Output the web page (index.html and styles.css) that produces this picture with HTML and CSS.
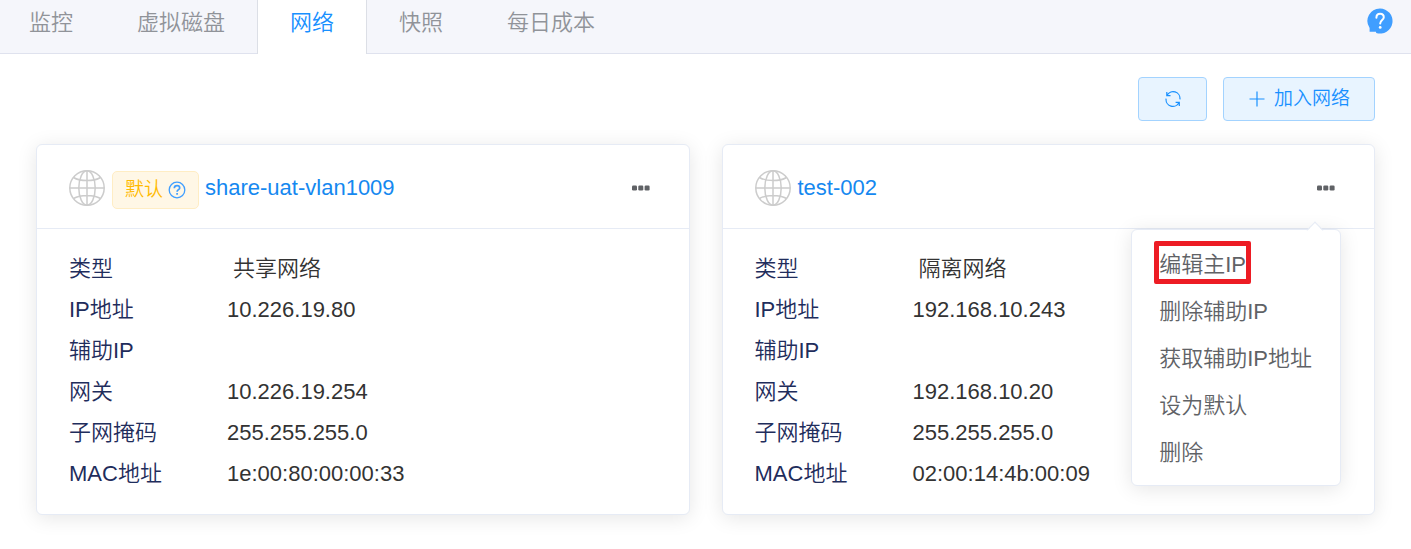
FILE: index.html
```html
<!DOCTYPE html>
<html lang="zh-CN">
<head>
<meta charset="utf-8">
<meta name="viewport" content="width=device-width, initial-scale=1">
<title>网络</title>
<link rel="stylesheet" href="styles.css">
</head>
<body>
<svg class="sprite" aria-hidden="true">
  <symbol id="globe" viewBox="0 0 36 36">
    <g fill="none" stroke="currentColor" stroke-width="1.5">
      <circle cx="18" cy="18" r="17.2"/>
      <ellipse cx="18" cy="18" rx="8.2" ry="17.2"/>
      <path d="M18 .8v34.400M.8 18h34.400M4.500 7.500C8 9.600 12.700 10.600 18 10.600S28 9.600 31.500 7.500M4.500 28.500C8 26.400 12.700 25.400 18 25.400S28 26.400 31.500 28.500"/>
    </g>
  </symbol>
  <symbol id="dots" viewBox="0 0 20 6">
    <rect x="1" y="0.500" width="5" height="5" rx="1.200"/>
    <rect x="7.300" y="0.500" width="5" height="5" rx="1.200"/>
    <rect x="13.600" y="0.500" width="5" height="5" rx="1.200"/>
  </symbol>
</svg>

<header class="topbar">
  <nav class="tabs">
    <a class="tab" href="#monitor">监控</a>
    <a class="tab" href="#disk">虚拟磁盘</a>
    <a class="tab tab-active" href="#network" aria-current="page">网络</a>
    <a class="tab" href="#snapshot">快照</a>
    <a class="tab" href="#cost">每日成本</a>
  </nav>
  <button class="help" type="button" aria-label="帮助">
    <svg class="help-icon" viewBox="0 0 26 26">
      <path fill="#409eff" d="M13 .5a12.500 12.500 0 1 1-3.800 24.400L9 23.800H2.600V20A12.500 12.500 0 0 1 13 .5z"/>
      <path fill="none" stroke="#fff" stroke-width="2" stroke-linecap="round" d="M9.400 9.800c0-2.500 1.500-4 3.700-4s3.700 1.400 3.700 3.500c0 2.700-3.600 2.900-3.600 6.200"/>
      <circle cx="13.200" cy="19.400" r="1.400" fill="#fff"/>
    </svg>
  </button>
</header>

<main class="content">
  <div class="toolbar">
    <button class="btn btn-refresh" type="button" aria-label="刷新">
      <svg class="btn-icon" viewBox="0 0 16 16" fill="none" stroke="currentColor" stroke-width="1.2">
        <path d="M1.800 1v3.700h3.700M2 4.600A6.800 6.800 0 0 1 14.900 8.400M14.300 15v-3.700h-3.700M14 11.400A6.800 6.800 0 0 1 1.100 7.600"/>
      </svg>
    </button>
    <button class="btn" type="button">
      <svg class="btn-icon" viewBox="0 0 16 16" fill="none" stroke="currentColor" stroke-width="1.200">
        <path d="M8 .5v15M.5 8h15"/>
      </svg>
      <span>加入网络</span>
    </button>
  </div>

  <div class="cards">
    <section class="card">
      <div class="card-head">
        <svg class="globe"><use href="#globe"/></svg>
        <span class="tag">默认
          <svg class="tag-icon" viewBox="0 0 18 18" fill="none" stroke="currentColor">
            <circle cx="9" cy="9" r="7.800" stroke-width="1.300"/>
            <path stroke-width="1.700" d="M6.300 7.300c0-1.600 1.100-2.600 2.700-2.600s2.700.9 2.700 2.300c0 1.700-2.600 1.700-2.600 3.700M9.100 12v1.700"/>
          </svg>
        </span>
        <a class="name" href="#share-uat-vlan1009">share-uat-vlan1009</a>
        <div class="menu-anchor">
          <button class="more" type="button" aria-label="更多操作"><svg class="dots"><use href="#dots"/></svg></button>
        </div>
      </div>
      <dl class="props">
        <dt>类型</dt><dd>&nbsp;共享网络</dd>
        <dt>IP地址</dt><dd>10.226.19.80</dd>
        <dt>辅助IP</dt><dd></dd>
        <dt>网关</dt><dd>10.226.19.254</dd>
        <dt>子网掩码</dt><dd>255.255.255.0</dd>
        <dt>MAC地址</dt><dd>1e:00:80:00:00:33</dd>
      </dl>
    </section>

    <section class="card">
      <div class="card-head">
        <svg class="globe"><use href="#globe"/></svg>
        <a class="name" href="#test-002">test-002</a>
        <div class="menu-anchor">
          <button class="more" type="button" aria-label="更多操作" aria-expanded="true"><svg class="dots"><use href="#dots"/></svg></button>
          <div class="menu">
            <button class="menu-item menu-item-marked" type="button">编辑主IP</button>
            <button class="menu-item" type="button">删除辅助IP</button>
            <button class="menu-item" type="button">获取辅助IP地址</button>
            <button class="menu-item" type="button">设为默认</button>
            <button class="menu-item" type="button">删除</button>
          </div>
        </div>
      </div>
      <dl class="props">
        <dt>类型</dt><dd>&nbsp;隔离网络</dd>
        <dt>IP地址</dt><dd>192.168.10.243</dd>
        <dt>辅助IP</dt><dd></dd>
        <dt>网关</dt><dd>192.168.10.20</dd>
        <dt>子网掩码</dt><dd>255.255.255.0</dd>
        <dt>MAC地址</dt><dd>02:00:14:4b:00:09</dd>
      </dl>
    </section>
  </div>
</main>
</body>
</html>
```

FILE: styles.css
```css
*,
*::before,
*::after {
  box-sizing: border-box;
}

body {
  margin: 0;
  background: #fff;
  color: #333;
  font: 350 22px/30px "Liberation Sans", "Noto Sans CJK SC", sans-serif;
}

button {
  margin: 0;
  padding: 0;
  border: 0;
  background: none;
  color: inherit;
  font: inherit;
  cursor: pointer;
}

a {
  text-decoration: none;
}

svg {
  display: block;
  flex: none;
}

.sprite {
  position: absolute;
  width: 0;
  height: 0;
}

.topbar {
  display: flex;
  justify-content: space-between;
  background: #f5f6fb;
  box-shadow: inset 0 -1px #dfe2ee;
}

.tabs {
  display: flex;
}

.tab {
  padding: 8px 32px 16px;
  color: #909399;
}

.tab:first-child {
  padding-left: 29px;
}

.tab-active {
  border: solid #dcdfe6;
  border-width: 0 1px;
  background: #fff;
  color: #1890ff;
}

.help {
  align-self: flex-start;
  padding: 8px 18px;
}

.help-icon {
  width: 26px;
  height: 26px;
}

.content {
  padding: 23px 36px 34px;
}

.toolbar {
  display: flex;
  justify-content: flex-end;
  gap: 16px;
  margin-bottom: 23px;
}

.btn {
  display: flex;
  align-items: center;
  gap: 9px;
  height: 44px;
  padding: 0 24px 0 25px;
  border: 1px solid #a3d3ff;
  border-radius: 4px;
  background: #e8f4ff;
  color: #1890ff;
  font-size: 19px;
}

.btn-refresh {
  padding: 0 25px 0 26px;
}

.btn-icon {
  width: 16px;
  height: 16px;
}

.cards {
  display: grid;
  grid-template-columns: 1fr 1fr;
  gap: 32px;
}

.card {
  border: 1px solid #e6ebf5;
  border-radius: 6px;
  background: #fff;
  box-shadow: 0 3px 20px rgba(0, 0, 0, 0.1);
}

.card-head {
  display: flex;
  align-items: center;
  height: 84px;
  padding: 3px 32px 0;
  border-bottom: 1px solid #e6ebf5;
}

.globe {
  width: 36px;
  height: 36px;
  margin-right: 7px;
  color: #ccc;
}

.tag {
  display: flex;
  align-items: center;
  gap: 5px;
  height: 38px;
  margin: 3px 6px 0 0;
  padding: 0 12px;
  border: 1px solid #ffedc4;
  border-radius: 5px;
  background: #fff7e6;
  color: #ffba00;
  font-size: 19px;
}

.tag-icon {
  width: 18px;
  height: 18px;
  color: #409eff;
}

.name {
  color: #1588f0;
}

.menu-anchor {
  position: relative;
  margin-left: auto;
}

.more {
  display: block;
  padding: 12px 6px;
}

.dots {
  width: 20px;
  height: 6px;
  fill: #606266;
}

.menu {
  position: absolute;
  z-index: 1;
  top: 56px;
  right: 1px;
  padding: 11px 0 9px;
  border: 1px solid #e6ebf5;
  border-radius: 6px;
  background: #fff;
  box-shadow: 0 3px 20px rgba(0, 0, 0, 0.1);
}

.menu::before {
  content: "";
  position: absolute;
  top: -6px;
  right: 19px;
  width: 12px;
  height: 12px;
  border: solid #e6ebf5;
  border-width: 1px 0 0 1px;
  background: linear-gradient(135deg, #fff 50%, transparent 50%);
  transform: rotate(45deg);
}

.menu-item {
  display: block;
  width: 100%;
  height: 47px;
  padding: 0 28px 0 27px;
  color: #606266;
  text-align: left;
  white-space: nowrap;
}

.menu-item-marked {
  position: relative;
}

.menu-item-marked::after {
  content: "";
  position: absolute;
  top: 0;
  left: 22px;
  width: 97px;
  height: 43px;
  border: 5px solid #ed1c24;
  border-radius: 2px;
}

.props {
  display: grid;
  grid-template-columns: 158px 1fr;
  grid-auto-rows: 41px;
  align-items: center;
  margin: 0;
  padding: 19px 32px 20px;
}

.props dt {
  color: #1f2d5c;
}

.props dd {
  margin: 0;
}
```
